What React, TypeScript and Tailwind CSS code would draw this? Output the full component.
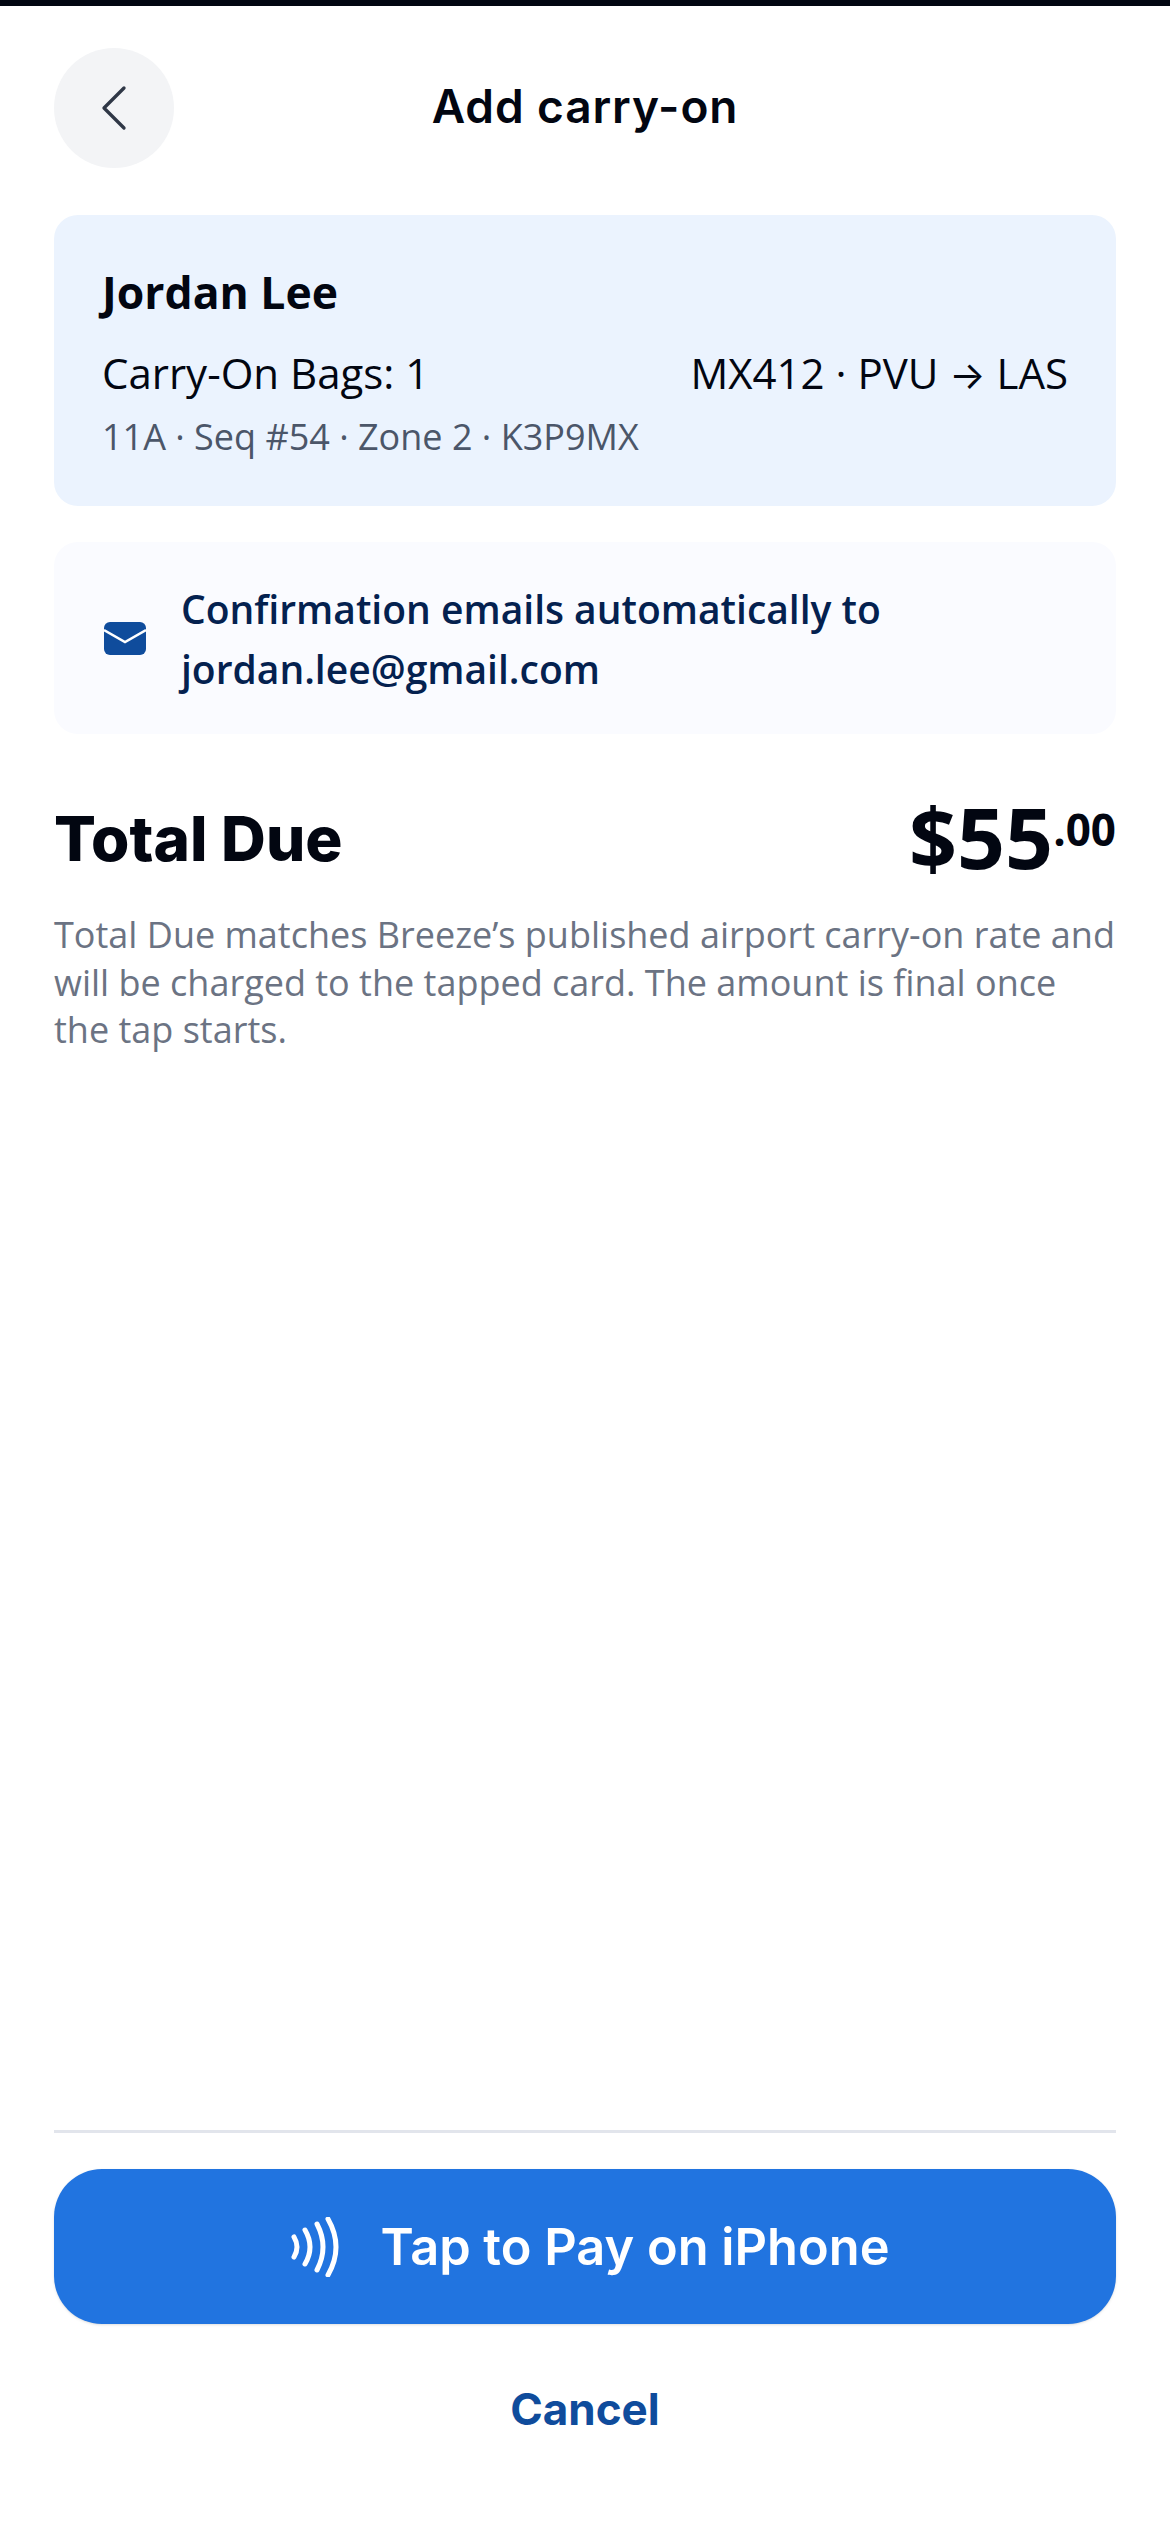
import React from 'react'
import { ChevronLeft } from 'lucide-react'

const openSans = { fontFamily: '"Open Sans", sans-serif' }

function TapIcon() {
  return (
    <svg width="48" height="60" viewBox="0 0 48 60" fill="none" stroke="#ffffff" strokeWidth="5" strokeLinecap="round">
      <path d="M3 20 Q9 30 3 40" />
      <path d="M14 13 Q24 30 14 47" />
      <path d="M26 7 Q38 30 26 53" />
      <path d="M37 2 Q53 30 37 58" />
    </svg>
  )
}

function MailIcon() {
  return (
    <svg width="42" height="33" viewBox="0 0 42 33">
      <rect width="42" height="33" rx="6" fill="#0f4c9c" />
      <path d="M0 8 L21 20 L42 8" fill="none" stroke="#ffffff" strokeWidth="2.5" />
    </svg>
  )
}

export default function App() {
  return (
    <div className="flex h-[2532px] w-[1170px] flex-col bg-white font-['Inter',sans-serif]">
      <div className="h-[6px] bg-[#020611]" />

      <div className="flex flex-1 flex-col px-[54px]">
        <div className="relative mt-[42px] flex h-[120px] items-center justify-center">
          <button className="absolute left-0 top-0 flex h-[120px] w-[120px] items-center justify-center rounded-full bg-[#f3f4f6]">
            <ChevronLeft className="size-[80px] text-[#2f3746]" strokeWidth={1} />
          </button>
          <h1 className="-mt-[3px] text-[46px] font-semibold tracking-[0.9px] text-[#020611]">Add carry-on</h1>
        </div>

        <div className="mt-[47px] flex h-[291px] flex-col rounded-[24px] bg-[#ebf3fe] px-[48px] pt-[46px]" style={openSans}>
          <div className="text-[44.5px] font-bold leading-[62px] text-[#020611]">Jordan Lee</div>
          <div className="mt-[19px] flex justify-between text-[42px] leading-[62px] text-[#020611]">
            <span>Carry-On Bags: 1</span>
            <span>
              MX412 · PVU <span className="font-['Inter',sans-serif] text-[38px]">→</span> LAS
            </span>
          </div>
          <div className="mt-[6px] text-[36px] leading-[50px] text-[#4b5669]">11A · Seq #54 · Zone 2 · K3P9MX</div>
        </div>

        <div className="mt-[36px] flex h-[192px] items-center gap-[35px] rounded-[24px] bg-[#fafbff] pl-[50px]" style={openSans}>
          <MailIcon />
          <div className="pt-[2px] text-[39px] font-semibold leading-[60px] text-[#04214f]">
            Confirmation emails automatically to
            <br />
            jordan.lee@gmail.com
          </div>
        </div>

        <div className="mt-[53px] flex items-center justify-between">
          <span className="pt-[3px] text-[62px] font-extrabold text-[#020611]">Total Due</span>
          <span className="flex items-start text-[#020611]" style={openSans}>
            <span className="text-[84px] font-bold leading-[100px]">$55</span>
            <span className="mt-[12px] text-[44px] font-bold leading-[60px]">.00</span>
          </span>
        </div>

        <p className="mt-[24px] text-[36px] leading-[47.5px] text-[#6b7383]" style={openSans}>
          Total Due matches Breeze’s published airport carry-on rate and will be charged to the tapped card. The amount is final once the tap starts.
        </p>

        <div className="mt-auto border-t-[3px] border-[#e2e5ec] pt-[36px]">
          <button className="flex h-[155px] w-full items-center justify-center gap-[42px] rounded-[48px] bg-[#2174e0] pl-[10px] shadow-sm">
            <TapIcon />
            <span className="text-[50.5px] font-semibold text-white">Tap to Pay on iPhone</span>
          </button>
          <div className="mt-[51px] h-[68px] text-center text-[44px] font-bold leading-[68px] text-[#0f4c9c]">Cancel</div>
        </div>
        <div className="h-[89px]" />
      </div>
    </div>
  )
}
